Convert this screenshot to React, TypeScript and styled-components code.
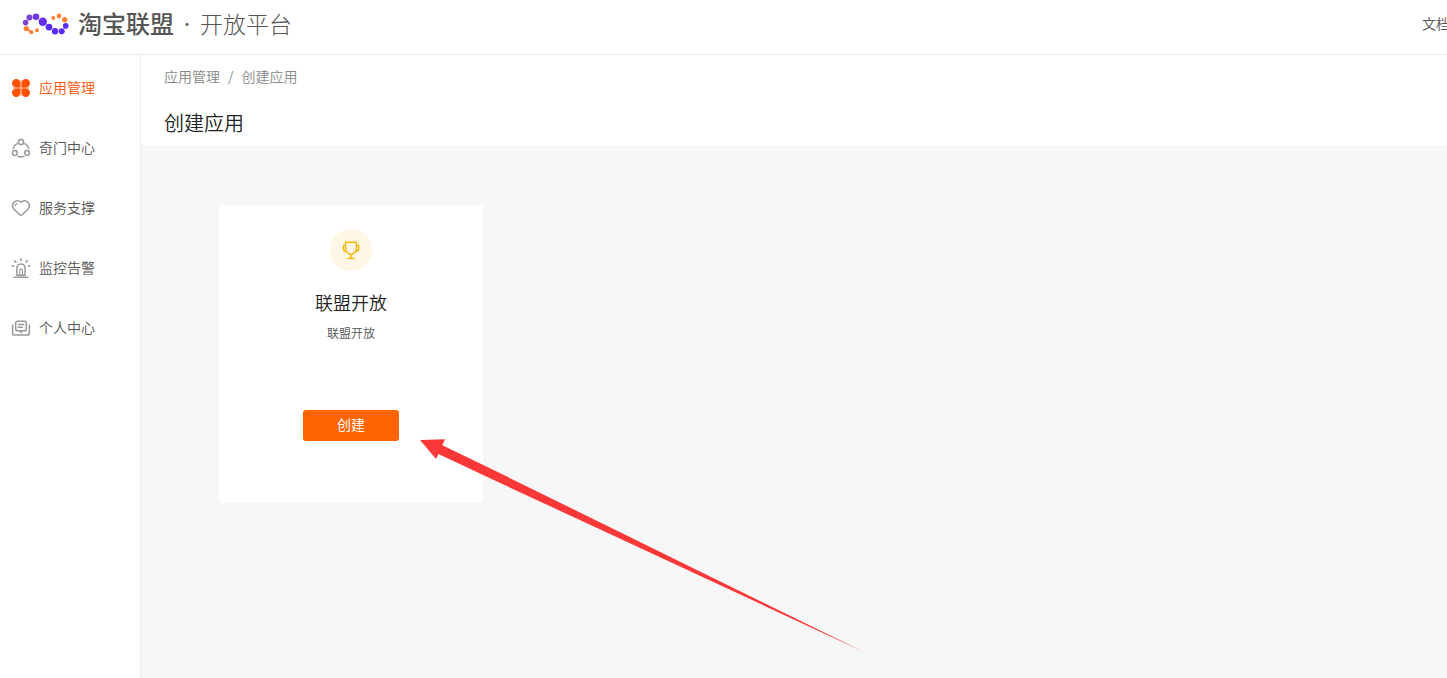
import React from "react";
import styled, { createGlobalStyle } from "styled-components";

const GlobalStyle = createGlobalStyle`
  * { box-sizing: border-box; }
  body {
    margin: 0;
    background: #fff;
    color: #222;
    font-family: "Noto Sans CJK SC", sans-serif;
    font-size: 14px;
    font-weight: 350;
    line-height: 20px;
  }
`;

const Page = styled.div`
  display: flex;
  flex-direction: column;
  min-height: 100vh;
`;

const Header = styled.header`
  display: flex;
  align-items: flex-start;
  justify-content: space-between;
  height: 55px;
  border-bottom: 1px solid #ebebeb;
`;

const Brand = styled.a`
  display: flex;
  align-items: center;
  height: 48px;
  padding-left: 22px;
  color: #555;
  font-size: 24px;
  line-height: 32px;
  text-decoration: none;
  white-space: nowrap;
`;

const BrandName = styled.span`
  margin-left: 8px;
  padding-bottom: 2px;
  font-weight: 500;
`;

const BrandDot = styled.span`
  width: 26px;
  padding-bottom: 2px;
  font-size: 14px;
  text-align: center;
`;

const BrandSuffix = styled.span`
  padding-bottom: 2px;
  color: #555;
  font-size: 23px;
  font-weight: 200;
`;

const TopNav = styled.nav`
  flex: 0 0 25px;
  overflow: hidden;
  padding-top: 13px;
  white-space: nowrap;
`;

const TopLink = styled.a`
  color: #555;
  text-decoration: none;
`;

const Body = styled.div`
  display: flex;
  flex: 1;
`;

const Sidebar = styled.nav`
  flex: 0 0 141px;
  padding-top: 3px;
  border-right: 1px solid #ebebeb;
`;

const MenuItem = styled.a<{ $active?: boolean }>`
  display: flex;
  align-items: center;
  gap: 8px;
  height: 60px;
  padding-left: 11px;
  color: ${(p) => (p.$active ? "#ff5000" : "#555")};
  text-decoration: none;

  svg {
    color: ${(p) => (p.$active ? "#ff5000" : "#999")};
  }
`;

const MenuLabel = styled.span`
  padding-bottom: 2px;
`;

const Main = styled.main`
  display: flex;
  flex: 1;
  flex-direction: column;
  min-width: 0;
`;

const PageHead = styled.div`
  padding: 11px 23px 8px;
`;

const Breadcrumb = styled.div`
  display: flex;
  gap: 8px;
  color: #888;
`;

const Crumb = styled.a`
  color: inherit;
  text-decoration: none;
`;

const PageTitle = styled.h1`
  margin: 23px 0 0;
  font-size: 20px;
  font-weight: 350;
  line-height: 28px;
`;

const Canvas = styled.div`
  position: relative;
  flex: 1;
  padding: 60px 78px;
  background: #f7f7f7;
`;

const Card = styled.section`
  display: flex;
  flex-direction: column;
  align-items: center;
  width: 264px;
  padding: 24px 24px 62px;
  border-radius: 4px;
  background: #fff;
`;

const Badge = styled.div`
  display: flex;
  align-items: center;
  justify-content: center;
  width: 42px;
  height: 42px;
  border-radius: 50%;
  background: #fff7e6;
`;

const CardTitle = styled.h2`
  margin: 17px 0 7px;
  font-size: 18px;
  font-weight: 350;
  line-height: 28px;
`;

const CardText = styled.p`
  margin: 0 0 67px;
  color: #555;
  font-size: 12px;
`;

const CreateButton = styled.button`
  width: 96px;
  height: 31px;
  padding: 0 0 4px;
  border: 0;
  border-radius: 3px;
  background: #ff6400;
  color: #fff;
  font: inherit;
  font-weight: 400;
  cursor: pointer;
`;

const Arrow = styled.svg`
  position: absolute;
  top: 294px;
  left: 279px;
  pointer-events: none;
`;

const LogoMark = () => (
  <svg width="48" height="24" viewBox="22 12 48 24" aria-hidden="true">
    <g fill="#ff8233">
      <circle cx="64.7" cy="19.7" r="2.7" />
      <circle cx="59" cy="16" r="2.4" />
      <circle cx="53.3" cy="18" r="2" />
      <circle cx="26.3" cy="28.6" r="2.7" />
      <circle cx="31.4" cy="32.3" r="2" />
      <circle cx="37" cy="30.2" r="2" />
      <path d="M26.5 28.5 31.4 32.3" stroke="#ff8233" strokeWidth="2" />
    </g>
    <g fill="#7b42cf">
      <circle cx="25.6" cy="22.6" r="2.8" />
      <circle cx="29.4" cy="17.6" r="3" />
    </g>
    <circle cx="36" cy="16.7" r="3.3" fill="#6f38dd" />
    <circle cx="42.8" cy="21.7" r="4.2" fill="#6430ee" />
    <g fill="#5a2cf8">
      <circle cx="49" cy="27.1" r="3.4" />
      <circle cx="55" cy="31.3" r="3.2" />
      <circle cx="61.7" cy="31.2" r="3" />
      <circle cx="65.7" cy="25.9" r="2.8" />
    </g>
  </svg>
);

const LineIcon = ({ children }: { children: React.ReactNode }) => (
  <svg
    width="20"
    height="20"
    viewBox="0 0 20 20"
    fill="none"
    stroke="currentColor"
    strokeWidth="1.5"
    strokeLinecap="round"
    strokeLinejoin="round"
    aria-hidden="true"
  >
    {children}
  </svg>
);

const AppsIcon = () => (
  <svg width="20" height="20" viewBox="0 0 20 20" fill="currentColor" aria-hidden="true">
    <path d="M9 2h2v16H9zM2 9h16v2H2z" opacity=".35" />
    <path d="M5.2 1a4.2 4.2 0 0 1 4.2 4.2v4.200H5.200a4.200 4.200 0 0 1 0-8.400ZM14.800 1a4.200 4.200 0 0 1 0 8.400h-4.200V5.200A4.200 4.200 0 0 1 14.800 1ZM5.200 10.600h4.200v4.200a4.200 4.200 0 1 1-4.200-4.200ZM10.600 10.600h4.200a4.200 4.200 0 1 1-4.200 4.200Z" />
  </svg>
);

const LinkedIcon = () => (
  <LineIcon>
    <circle cx="10" cy="4" r="2.6" />
    <circle cx="3.9" cy="15" r="2.4" />
    <circle cx="16.100" cy="15" r="2.4" />
    <path d="M6 5.700C4 7 2.700 8.500 2.200 10.400M14 5.700c2 1.300 3.300 2.800 3.800 4.700M7 18.400c2 .7 4 .7 6 0" />
  </LineIcon>
);

const HeartIcon = () => (
  <LineIcon>
    <path d="M10 4.300C8.300 2.400 5 2.200 3.100 4.300c-2.100 2.300-1.900 5 0 7l5.700 5.500c.7.700 1.700.7 2.400 0l5.700-5.500c1.900-2 2.100-4.700 0-7C15 2.200 11.700 2.400 10 4.300Z" />
    <path d="M4.300 7.600c.2-1.200.8-1.800 1.800-2" strokeWidth="1.1" />
  </LineIcon>
);

const AlarmIcon = () => (
  <LineIcon>
    <path d="M3 19.300h14M5.900 17.200V10a4.100 4.100 0 0 1 8.200 0v7.200ZM10 .7v1.900M3.600 2.800l1.300 1.400M16.400 2.800l-1.300 1.400M1 8h1.700M17.300 8H19" />
    <path d="M8.800 16.500v-3.800c0-1 .5-1.600 1.400-1.600s1.300.6 1.300 1.600v3.800" strokeWidth="1.100" />
  </LineIcon>
);

const ProfileIcon = () => (
  <LineIcon>
    <rect x="4.700" y="3.200" width="10.600" height="9.600" rx="1.800" />
    <path d="M7.200 6.500h5.600M7.200 9.300h4.200M1.600 6.900v8.300c0 1.300.6 1.900 1.900 1.900h13c1.300 0 1.900-.6 1.900-1.900V6.900M9.200 13.800l.8.700.8-.7" />
  </LineIcon>
);

const TrophyIcon = () => (
  <svg
    width="20"
    height="20"
    viewBox="0 0 20 20"
    fill="none"
    stroke="#f7b500"
    strokeWidth="1.400"
    strokeLinejoin="round"
    aria-hidden="true"
  >
    <path d="M4.600 2.300h10.800v6.700c0 2.500-2.200 4.600-5.400 5.600-3.200-1-5.400-3.100-5.400-5.600ZM10 14.600v3.600M6.200 18.400h7.600M4.600 5.400H2.400v4.200c0 .9.600 1.500 2.400 1.500M15.400 5.400h2.200v4.200c0 .9-.6 1.500-2.400 1.500" />
  </svg>
);

const MENU = [
  { label: "应用管理", icon: <AppsIcon />, active: true },
  { label: "奇门中心", icon: <LinkedIcon /> },
  { label: "服务支撑", icon: <HeartIcon /> },
  { label: "监控告警", icon: <AlarmIcon /> },
  { label: "个人中心", icon: <ProfileIcon /> },
];

export default function App() {
  return (
    <Page>
      <GlobalStyle />
      <Header>
        <Brand href="#">
          <LogoMark />
          <BrandName>淘宝联盟</BrandName>
          <BrandDot>·</BrandDot>
          <BrandSuffix>开放平台</BrandSuffix>
        </Brand>
        <TopNav>
          <TopLink href="#">文档</TopLink>
        </TopNav>
      </Header>
      <Body>
        <Sidebar>
          {MENU.map((item) => (
            <MenuItem key={item.label} href="#" $active={item.active}>
              {item.icon}
              <MenuLabel>{item.label}</MenuLabel>
            </MenuItem>
          ))}
        </Sidebar>
        <Main>
          <PageHead>
            <Breadcrumb>
              <Crumb href="#">应用管理</Crumb>
              <span>/</span>
              <span>创建应用</span>
            </Breadcrumb>
            <PageTitle>创建应用</PageTitle>
          </PageHead>
          <Canvas>
            <Card>
              <Badge>
                <TrophyIcon />
              </Badge>
              <CardTitle>联盟开放</CardTitle>
              <CardText>联盟开放</CardText>
              <CreateButton type="button">创建</CreateButton>
            </Card>
            <Arrow width="445" height="214" viewBox="420 439 445 214" aria-hidden="true">
              <path
                d="M420 440 445 439.3 442.3 445.3 490 468.3 864 652 490 478.3 438.5 454 436 459Z"
                fill="#fb3838"
              />
            </Arrow>
          </Canvas>
        </Main>
      </Body>
    </Page>
  );
}
